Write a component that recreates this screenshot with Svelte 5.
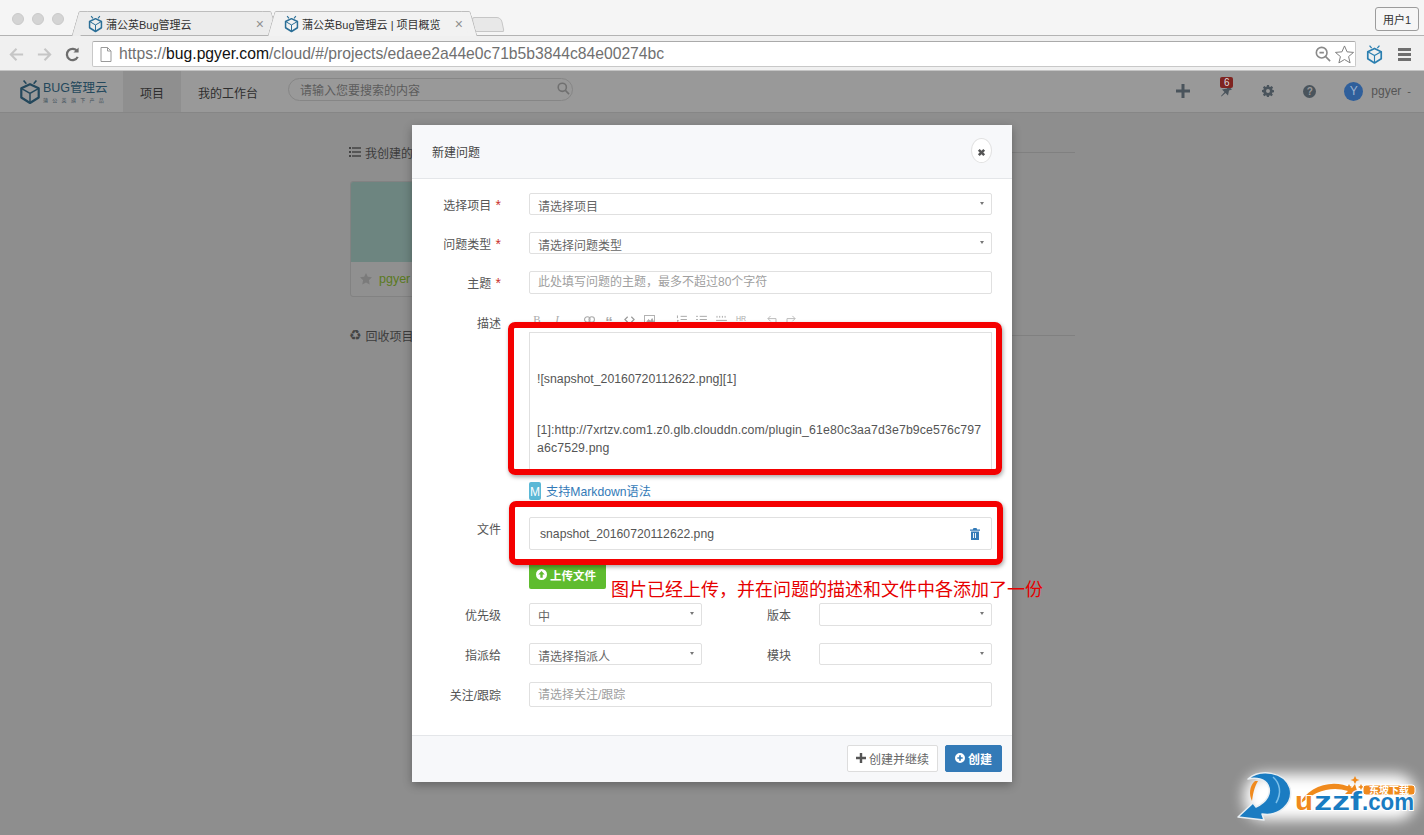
<script>
  const splitRows = [
    { label: '优先级', value: '中', side: '版本' },
    { label: '指派给', value: '请选择指派人', side: '模块' },
  ];
</script>

{#snippet cube(cls)}
  <svg class={cls} viewBox="0 0 24 28" fill="none" stroke="currentColor" stroke-width="2.4" stroke-linejoin="round">
    <path d="M12 5.500 L21.500 10 V20 L12 26 L2.500 20 V10 Z" />
    <path d="M2.500 10 L12 15.500 L21.500 10 M12 15.500 V26" stroke-width="1.6" />
    <path d="M5 1.500 L8 5 M19 1.500 L16 5" stroke-width="1.8" />
  </svg>
{/snippet}

{#snippet caret()}
  <span class="caret"></span>
{/snippet}

<div class="window">
  <div class="tabstrip">
    <div class="lights"><i></i><i></i><i></i></div>
    <div class="tab">
      {@render cube('favicon')}
      <span class="tab-title">蒲公英Bug管理云</span>
      <span class="tab-x">×</span>
    </div>
    <div class="tab active">
      {@render cube('favicon')}
      <span class="tab-title">蒲公英Bug管理云 | 项目概览</span>
      <span class="tab-x">×</span>
    </div>
    <div class="newtab"></div>
    <div class="user-btn">用户1</div>
  </div>

  <div class="toolbar">
    <svg class="nav-ico" viewBox="0 0 18 18" fill="none" stroke="#c6c6c6" stroke-width="2.2"><path d="M16 9H3M9 3L3 9l6 6" /></svg>
    <svg class="nav-ico" viewBox="0 0 18 18" fill="none" stroke="#c6c6c6" stroke-width="2.2"><path d="M2 9h13M9 3l6 6-6 6" /></svg>
    <svg class="nav-ico" viewBox="0 0 18 18" fill="none" stroke="#6e6e6e" stroke-width="2.4"><path d="M14.500 11.500A6 6 0 1 1 14 5.500" /><path d="M15.500 1.500v5.500H10" fill="#6e6e6e" stroke="none" /></svg>
    <div class="omnibox">
      <svg class="page-ico" viewBox="0 0 12 15" fill="#fff" stroke="#9a9a9a"><path d="M1 .5h6.500L11 4v10.500H1zM7.500 .5V4H11" /></svg>
      <span class="url"><span class="dim">https://</span>bug.pgyer.com<span class="dim">/cloud/#/projects/edaee2a44e0c71b5b3844c84e00274bc</span></span>
      <svg class="zoom-ico" viewBox="0 0 18 18" fill="none" stroke="#8a8a8a" stroke-width="1.8"><circle cx="7.500" cy="7.500" r="6" /><path d="M12 12l5 5M5 7.500h5" /></svg>
      <svg class="star-ico" viewBox="0 0 20 20" fill="#fff" stroke="#7a7a7a"><path d="M10 1l2.700 6.200 6.800.6-5.200 4.400 1.600 6.600L10 15.300 4.100 18.800l1.600-6.600L.5 7.800l6.800-.6z" /></svg>
    </div>
    {@render cube('ext-ico')}
    <div class="burger"><i></i><i></i><i></i></div>
  </div>

  <div class="app">
    <header class="topnav">
      <div class="brand">
        {@render cube('brand-ico')}
        <div class="brand-text">
          <span class="brand-name">BUG管理云</span>
          <span class="brand-sub">蒲公英旗下产品</span>
        </div>
      </div>
      <a class="navitem current">项目</a>
      <a class="navitem">我的工作台</a>
      <div class="search">
        <span>请输入您要搜索的内容</span>
        <svg viewBox="0 0 14 14" fill="none" stroke="#707070" stroke-width="1.7"><circle cx="5.700" cy="5.700" r="4.400" /><path d="M9 9l4 4" /></svg>
      </div>
      <div class="nav-right">
        <svg class="plus-ico" viewBox="0 0 14 14"><path d="M5.500 0h3v5.500H14v3H8.500V14h-3V8.500H0v-3h5.500z" fill="#4a545c" /></svg>
        <div class="bell">
          <svg viewBox="0 0 14 14"><path d="M8.500 1l4.500 4.500-3 1-1 5-2.500-2.500-4 3.500-.5-.5 3.500-4L3 5.500l5-1z" fill="#4a545c" /></svg>
          <span class="badge">6</span>
        </div>
        <svg class="cog-ico" viewBox="0 0 14 14"><path fill="#4a545c" fill-rule="evenodd" d="M5.800 0h2.400l.3 1.900 1.100.5 1.600-1.100 1.700 1.700-1.100 1.600.5 1.100 1.700.3v2.400l-1.900.3-.5 1.100 1.100 1.600-1.700 1.700-1.600-1.100-1.100.5-.3 1.900H5.800l-.3-1.900-1.100-.5-1.600 1.100-1.700-1.700 1.100-1.600-.5-1.100L0 8.200V5.800l1.700-.3.500-1.100L1.100 2.800l1.700-1.700 1.600 1.100 1.100-.5zM7 4.700a2.300 2.300 0 1 0 0 4.600 2.300 2.300 0 0 0 0-4.600z" /></svg>
        <span class="help">?</span>
        <span class="avatar">Y</span>
        <span class="username">pgyer</span>
        <span class="user-dash">-</span>
      </div>
    </header>

    <main class="content">
      <div class="section-head">
        <svg viewBox="0 0 12 10" fill="#444"><path d="M0 0h2v2H0zM3 .3h9v1.400H3zM0 4h2v2H0zM3 4.300h9v1.400H3zM0 8h2v2H0zM3 8.300h9v1.400H3z" /></svg>
        <span>我创建的</span>
        <span class="rule"></span>
      </div>
      <div class="card">
        <div class="card-cover"></div>
        <div class="card-foot">
          <svg viewBox="0 0 14 14" fill="#7b7b7b"><path d="M7 0l2.100 4.500 4.900.6-3.600 3.400.9 4.900L7 11l-4.300 2.400.9-4.900L0 5.100l4.900-.6z" /></svg>
          <span>pgyer</span>
        </div>
      </div>
      <div class="section-head recycle">
        <span class="recycle-ico">♻</span>
        <span>回收项目</span>
        <span class="rule"></span>
      </div>
    </main>

    <section class="modal">
      <div class="modal-head">
        <span>新建问题</span>
        <button class="close" aria-label="关闭">
          <svg viewBox="0 0 10 10"><path d="M1 3l2-2 2 2 2-2 2 2-2 2 2 2-2 2-2-2-2 2-2-2 2-2z" fill="#555" /></svg>
        </button>
      </div>

      <div class="modal-body">
        <div class="row r-project">
          <label>选择项目 <b>*</b></label>
          <div class="field select">请选择项目{@render caret()}</div>
        </div>
        <div class="row r-type">
          <label>问题类型 <b>*</b></label>
          <div class="field select">请选择问题类型{@render caret()}</div>
        </div>
        <div class="row r-title">
          <label>主题 <b>*</b></label>
          <div class="field placeholder">此处填写问题的主题，最多不超过80个字符</div>
        </div>

        <div class="row r-desc">
          <label>描述</label>
          <div class="editor">
            <div class="md-tools">
              <span class="tool serif">B</span>
              <span class="tool serif it">I</span>
              <span class="tool sep">
                <svg viewBox="0 0 12 8" fill="none" stroke="#aaa" stroke-width="1.2"><rect x=".6" y="1" width="6" height="6" rx="3" /><rect x="5.400" y="1" width="6" height="6" rx="3" /></svg>
              </span>
              <span class="tool quote">“</span>
              <span class="tool">
                <svg viewBox="0 0 12 8" fill="none" stroke="#999" stroke-width="1.3"><path d="M4 1L1 4l3 3M8 1l3 3-3 3" /></svg>
              </span>
              <span class="tool">
                <svg viewBox="0 0 12 10" fill="none" stroke="#aaa"><rect x=".5" y=".5" width="11" height="9" /><path d="M2 9l3-4 2 2 2-3 2 5z" fill="#aaa" /></svg>
              </span>
              <span class="tool sep">
                <svg viewBox="0 0 12 10" fill="none" stroke="#aaa" stroke-width="1.100"><path d="M5 1.500h7M5 5h7M5 8.500h7M1.500 .5v3M1 6h1.500L1 9h2" /></svg>
              </span>
              <span class="tool">
                <svg viewBox="0 0 12 10" fill="none" stroke="#aaa" stroke-width="1.100"><path d="M4 1.500h8M4 5h8M4 8.500h8M0 1.500h2M0 5h2M0 8.500h2" /></svg>
              </span>
              <span class="tool">
                <svg viewBox="0 0 12 10" fill="none" stroke="#aaa" stroke-width="1.100"><path d="M0 9h12M0 6h12M1 1v2M4 1v2M7 1v2M10 1v2" /></svg>
              </span>
              <span class="tool hr">HR</span>
              <span class="tool sep2">
                <svg viewBox="0 0 12 10" fill="none" stroke="#bbb" stroke-width="1.100"><path d="M11 9V4H2M5 1L2 4l3 3" /></svg>
              </span>
              <span class="tool">
                <svg viewBox="0 0 12 10" fill="none" stroke="#bbb" stroke-width="1.100"><path d="M1 9V4h9M7 1l3 3-3 3" /></svg>
              </span>
            </div>
            <div class="md-area">
              <p>![snapshot_20160720112622.png][1]</p>
              <p class="url-line">[1]:http://7xrtzv.com1.z0.glb.clouddn.com/plugin_61e80c3aa7d3e7b9ce576c797a6c7529.png</p>
            </div>
            <a class="md-link"><span class="m-badge">M</span>支持Markdown语法</a>
          </div>
        </div>

        <div class="row r-file">
          <label>文件</label>
          <div class="files">
            <div class="file-item">
              <span>snapshot_20160720112622.png</span>
              <svg viewBox="0 0 10 12" fill="#337ab7"><path fill-rule="evenodd" d="M3.500 0h3l.7 1.500H10v1.200H0V1.500h2.800zM1 3.500h8V12H1zM3 5v5h.9V5zm2.100 0v5H6V5z" /></svg>
            </div>
            <button class="upload">
              <svg viewBox="0 0 12 12"><path fill-rule="evenodd" fill="#fff" d="M6 0a6 6 0 1 1 0 12A6 6 0 0 1 6 0zm0 2.200L2.500 6h2.200v3.500h2.600V6h2.200z" /></svg>
              上传文件
            </button>
          </div>
        </div>

        <div class="split-rows">
          {#each splitRows as r}
            <div class="row split">
              <label>{r.label}</label>
              <div class="field select">{r.value}{@render caret()}</div>
              <label>{r.side}</label>
              <div class="field select">{@render caret()}</div>
            </div>
          {/each}
        </div>

        <div class="row r-watch">
          <label>关注/跟踪</label>
          <div class="field placeholder">请选择关注/跟踪</div>
        </div>
      </div>

      <div class="modal-foot">
        <button class="btn ghost">
          <svg viewBox="0 0 14 14"><path d="M5.300 0h3.400v5.300H14v3.400H8.700V14H5.300V8.700H0V5.300h5.300z" fill="#555" /></svg>
          创建并继续
        </button>
        <button class="btn primary">
          <svg viewBox="0 0 12 12"><path fill-rule="evenodd" fill="#fff" d="M6 0a6 6 0 1 1 0 12A6 6 0 0 1 6 0zM5 2.800V5H2.800v2H5v2.200h2V7h2.200V5H7V2.800z" /></svg>
          创建
        </button>
      </div>

      <div class="callout c1"></div>
      <div class="callout c2"></div>
      <div class="note">图片已经上传，并在问题的描述和文件中各添加了一份</div>
    </section>

    <div class="watermark">
      <div class="wm-glow"></div>
      <svg viewBox="0 0 204 75" width="204" height="75">
        <path d="M18 57 L33 43 L36 47 C47 42 52 33 48 25 C45 19 36 17 28 19 C40 9 64 11 70 28 C74 44 58 57 42 54 L44 60 Z" fill="#1a7cc2" stroke="#e8eef2" stroke-width="1.500" stroke-linejoin="round" />
        <path d="M35 21 C29 26 29 35 32 41 C33 34 34 28 38 21 Z" fill="#f08a1d" />
        <path d="M53 17 C60 23 62 33 56 43" fill="none" stroke="#7cc0ea" stroke-width="1.500" />
        <path d="M78 46 C88 26 112 18 132 28 L135 24 L138 34 L125 34 L128 31 C112 26 95 30 78 46 Z" fill="#f08a1d" />
        <path d="M135 16l1.500 3 3 1-3 1-1.500 3-1.500-3-3-1 3-1zM129 24l1 2 2 1-2 1-1 2-1-2-2-1 2-1zM141 24l1 2 2 1-2 1-1 2-1-2-2-1 2-1z" fill="#f08a1d" />
        <text x="75" y="50" class="wm-u" textLength="18" lengthAdjust="spacingAndGlyphs">u</text>
        <text x="94" y="50" class="wm-zz" textLength="48" lengthAdjust="spacingAndGlyphs">zzf</text>
        <text x="142" y="50" class="wm-com" textLength="52" lengthAdjust="spacingAndGlyphs">.com</text>
        <rect x="143" y="25" width="52" height="10" rx="3" fill="#f08a1d" stroke="#fff" />
        <text x="169" y="34" class="wm-tag" text-anchor="middle">东坡下载</text>
      </svg>
    </div>
  </div>
</div>

<style>
  :global(body) {
    margin: 0;
    background: #8e8e8e;
  }

  .window {
    width: 1424px;
    height: 835px;
    overflow: hidden;
    display: flex;
    flex-direction: column;
    font-family: "Liberation Sans", "Noto Sans CJK SC", sans-serif;
    color: #333;
  }

  .tabstrip {
    height: 36px;
    flex: none;
    box-sizing: border-box;
    background: #f5f5f5;
    border-bottom: 1px solid #b3b3b3;
    display: flex;
    align-items: flex-end;
    padding-left: 12px;
  }

  .lights {
    display: flex;
    gap: 8px;
    align-self: flex-start;
    margin-top: 13px;
    margin-right: 16px;
  }

  .lights i {
    width: 12px;
    height: 12px;
    border-radius: 50%;
    background: #d4d4d4;
    border: 0.5px solid #cacaca;
    box-sizing: border-box;
  }

  .tab {
    position: relative;
    height: 25px;
    width: 190px;
    margin-right: 6px;
    margin-bottom: -1px;
    box-sizing: border-box;
    padding: 0 6px 0 8px;
    display: flex;
    align-items: center;
    gap: 3px;
    font-size: 11px;
    color: #333;
    background: #ececec;
    border-top: 1px solid #bdbdbd;
    border-bottom: 1px solid #b3b3b3;
  }

  .tab::before,
  .tab::after {
    content: "";
    position: absolute;
    top: -1px;
    bottom: -1px;
    width: 9px;
    background: inherit;
    border-top: 1px solid #bdbdbd;
    border-left: 1px solid #bdbdbd;
    border-radius: 2px 0 0 0;
    box-sizing: border-box;
  }

  .tab::before {
    left: -5px;
    transform: skewX(-16deg);
  }

  .tab::after {
    right: -5px;
    border-left: none;
    border-right: 1px solid #bdbdbd;
    border-radius: 0 2px 0 0;
    transform: skewX(16deg);
  }

  .tab.active {
    background: #f2f2f2;
    border-bottom-color: #f2f2f2;
    width: 193px;
    z-index: 2;
    margin-right: 4px;
  }

  .tab-title {
    flex: 1;
    white-space: nowrap;
    overflow: hidden;
    z-index: 1;
  }

  .tab-x {
    color: #8f8f8f;
    font-size: 14px;
    line-height: 1;
    z-index: 1;
  }

  .favicon {
    width: 15px;
    height: 18px;
    color: #2b6f97;
    flex: none;
    z-index: 1;
  }

  .newtab {
    width: 30px;
    height: 15px;
    margin-bottom: 3px;
    background: #e8e8e8;
    border: 1px solid #c6c6c6;
    border-radius: 3px 5px 2px 2px;
    box-sizing: border-box;
    transform: skewX(12deg);
  }

  .user-btn {
    margin-left: auto;
    margin-right: 5px;
    align-self: flex-start;
    margin-top: 7px;
    width: 44px;
    height: 24px;
    box-sizing: border-box;
    border: 1px solid #9c9c9c;
    border-radius: 3px;
    background: #f6f6f6;
    font-size: 11px;
    display: flex;
    align-items: center;
    justify-content: center;
  }

  .toolbar {
    height: 35px;
    flex: none;
    box-sizing: border-box;
    background: #f0f0f0;
    border-bottom: 1px solid #c4c4c4;
    display: flex;
    align-items: center;
    padding: 2px 9px 0 8px;
  }

  .nav-ico {
    width: 17px;
    height: 17px;
    margin-right: 11px;
  }

  .omnibox {
    width: 1264px;
    height: 26px;
    box-sizing: border-box;
    background: #fff;
    border: 1px solid #c8c8c8;
    border-top-color: #aaa;
    border-radius: 2px;
    display: flex;
    align-items: center;
    padding: 0 1px 0 7px;
  }

  .page-ico {
    width: 12px;
    height: 15px;
    margin-right: 7px;
    flex: none;
  }

  .url {
    font-size: 15.700px;
    color: #111;
    flex: 1;
    white-space: nowrap;
  }

  .dim {
    color: #707070;
  }

  .zoom-ico {
    width: 16px;
    height: 16px;
    margin-right: 4px;
  }

  .star-ico {
    width: 19px;
    height: 19px;
  }

  .ext-ico {
    width: 17px;
    height: 21px;
    color: #2b7fb0;
    margin-left: 10px;
  }

  .burger {
    margin-left: 15px;
    display: flex;
    flex-direction: column;
    gap: 2px;
  }

  .burger i {
    width: 13px;
    height: 3px;
    background: #6f6f6f;
  }

  .app {
    position: relative;
    flex: 1;
    background: #8e8e8e;
  }

  .topnav {
    height: 42px;
    box-sizing: border-box;
    background: #999;
    border-bottom: 1px solid #868686;
    display: flex;
    align-items: center;
    padding-left: 19px;
  }

  .brand {
    width: 104px;
    display: flex;
    align-items: center;
    gap: 2px;
  }

  .brand-ico {
    width: 22px;
    height: 26px;
    color: #24485c;
    flex: none;
  }

  .brand-text {
    display: flex;
    flex-direction: column;
    line-height: 1;
    margin-top: 2px;
  }

  .brand-name {
    font-size: 12.500px;
    color: #24485c;
  }

  .brand-sub {
    font-size: 5px;
    letter-spacing: 4.300px;
    color: #3d4f59;
    margin-top: 3px;
    white-space: nowrap;
  }

  .navitem {
    height: 41px;
    box-sizing: border-box;
    display: flex;
    align-items: center;
    padding: 1px 17px 0;
    font-size: 12px;
    color: #2e2e2e;
  }

  .navitem.current {
    background: #8f8f8f;
    width: 58px;
    justify-content: center;
    padding: 1px 0 0;
  }

  .search {
    margin: -5px 0 0 13px;
    width: 285px;
    height: 23px;
    box-sizing: border-box;
    border: 1px solid #868686;
    border-radius: 12px;
    display: flex;
    align-items: center;
    justify-content: space-between;
    padding: 0 2px 0 11px;
    font-size: 12px;
    color: #5c5c5c;
  }

  .search svg {
    width: 13px;
    height: 13px;
    margin-bottom: 2px;
  }

  .nav-right {
    margin-left: auto;
    margin-top: -1px;
    display: flex;
    align-items: center;
    padding-right: 13px;
  }

  .plus-ico {
    width: 14px;
    height: 14px;
    margin-right: 29px;
  }

  .bell {
    position: relative;
    width: 14px;
    height: 14px;
    margin-right: 29px;
  }

  .bell svg {
    width: 14px;
    height: 14px;
  }

  .badge {
    position: absolute;
    top: -7px;
    left: 1px;
    width: 13px;
    height: 11px;
    border-radius: 2px;
    background: #7f2420;
    color: #ddd;
    font-size: 10px;
    line-height: 11px;
    text-align: center;
  }

  .cog-ico {
    width: 12px;
    height: 12px;
    margin-right: 29px;
  }

  .help {
    width: 13px;
    height: 13px;
    border-radius: 50%;
    background: #4a545c;
    color: #999;
    font-size: 10px;
    font-weight: bold;
    line-height: 13px;
    text-align: center;
    margin-right: 28px;
  }

  .avatar {
    width: 19px;
    height: 19px;
    border-radius: 50%;
    background: #2f5f9b;
    color: #9db3cf;
    font-size: 12px;
    line-height: 19px;
    text-align: center;
    margin-right: 8px;
  }

  .username {
    font-size: 12px;
    color: #555;
  }

  .user-dash {
    font-size: 11px;
    color: #555;
    margin-left: 6px;
  }

  .content {
    width: 726px;
    margin-left: 349px;
    padding-top: 31px;
    font-size: 12px;
    color: #3c3c3c;
  }

  .section-head {
    display: flex;
    align-items: center;
    height: 16px;
    gap: 4px;
  }

  .section-head > svg {
    width: 12px;
    height: 10px;
  }

  .rule {
    flex: 1;
    height: 1px;
    background: #808080;
    margin-left: 8px;
  }

  .card {
    width: 120px;
    height: 116px;
    margin: 21px 0 0 1px;
    box-sizing: border-box;
    border: 1px solid #828282;
    border-radius: 3px;
    background: #909090;
    overflow: hidden;
  }

  .card-cover {
    height: 80px;
    background: #6d8580;
  }

  .card-foot {
    height: 34px;
    display: flex;
    align-items: center;
    padding-left: 9px;
    gap: 7px;
    font-size: 12.500px;
    color: #5a7a20;
  }

  .card-foot svg {
    width: 12px;
    height: 12px;
  }

  .section-head.recycle {
    margin-top: 30px;
  }

  .recycle-ico {
    font-family: "DejaVu Sans", sans-serif;
    font-size: 14px;
    color: #444;
  }

  .modal {
    position: absolute;
    left: 412px;
    top: 54px;
    width: 600px;
    height: 657px;
    background: #fff;
    box-shadow: 0 3px 9px rgba(0, 0, 0, 0.3);
    display: flex;
    flex-direction: column;
    font-size: 12px;
    color: #555;
  }

  .modal-head {
    height: 54px;
    flex: none;
    box-sizing: border-box;
    background: #f7f8fa;
    border-bottom: 1px solid #e4e6e9;
    display: flex;
    align-items: center;
    justify-content: space-between;
    padding: 0 20px;
    color: #444;
  }

  .close {
    width: 21px;
    height: 25px;
    padding: 0;
    margin-top: -2px;
    border: 1px solid #e2e2e2;
    border-radius: 50%;
    background: #fff;
    display: flex;
    align-items: center;
    justify-content: center;
  }

  .close svg {
    width: 9px;
    height: 9px;
    margin-top: 3px;
  }

  .modal-body {
    flex: 1;
    padding-top: 14px;
    display: flex;
    flex-direction: column;
  }

  .row {
    display: grid;
    grid-template-columns: 89px 463px;
    column-gap: 28px;
    align-items: center;
  }

  label {
    text-align: right;
    color: #555;
    white-space: nowrap;
  }

  label b {
    color: #c9302c;
    font-size: 14px;
    line-height: 1;
    font-weight: normal;
    margin-left: 1px;
  }

  .field {
    position: relative;
    box-sizing: border-box;
    height: 22px;
    border: 1px solid #e0e0e0;
    border-radius: 2px;
    background: #fff;
    padding: 4px 0 0 8px;
    line-height: 19px;
    color: #666;
    overflow: hidden;
  }

  .placeholder {
    padding-top: 0;
    line-height: 21px;
    color: #a0a0a0;
  }

  .caret {
    position: absolute;
    right: 7px;
    top: 8px;
    border: 2px solid transparent;
    border-top: 3px solid #777;
    border-bottom: none;
  }

  .r-type {
    margin-top: 17px;
  }

  .r-title {
    margin-top: 17px;
  }

  .r-title .field {
    height: 23px;
  }

  .r-desc {
    margin-top: 19px;
    align-items: start;
  }

  .r-desc label {
    margin-top: 1px;
  }

  .md-tools {
    height: 19px;
    display: flex;
    align-items: flex-start;
    margin-left: -2px;
    font-size: 9px;
    line-height: 12px;
    color: #aaa;
  }

  .tool {
    width: 20px;
    height: 12px;
    flex: none;
    display: flex;
    align-items: center;
    justify-content: center;
  }

  .tool svg {
    width: 11px;
    height: 9px;
  }

  .sep {
    margin-left: 12px;
  }

  .sep2 {
    margin-left: 10px;
  }

  .serif {
    font-family: "Liberation Serif", serif;
    font-size: 11px;
  }

  .it {
    font-style: italic;
  }

  .quote {
    font-size: 15px;
    font-weight: bold;
    line-height: 18px;
    align-items: flex-start;
  }

  .hr {
    font-size: 7px;
  }

  .md-area {
    box-sizing: border-box;
    height: 141px;
    border: 1px solid #e0e0e0;
    padding: 37px 8px 0 7px;
    font-size: 12.300px;
    line-height: 18px;
    color: #555;
    word-break: break-all;
  }

  .md-area p {
    margin: 0;
  }

  .url-line {
    padding-top: 33px;
    letter-spacing: 0.13px;
  }

  .md-link {
    display: flex;
    align-items: center;
    gap: 5px;
    margin-top: 9px;
    height: 18px;
    font-size: 12.200px;
    color: #337ab7;
  }

  .m-badge {
    width: 12px;
    height: 18px;
    border-radius: 2px;
    background: #5bb8d6;
    color: #fff;
    font-size: 12px;
    line-height: 20px;
    text-align: center;
  }

  .r-file {
    margin-top: 17px;
    align-items: start;
  }

  .r-file label {
    margin-top: 3px;
  }

  .file-item {
    height: 33px;
    box-sizing: border-box;
    border: 1px solid #e0e0e0;
    border-radius: 2px;
    display: flex;
    align-items: center;
    justify-content: space-between;
    padding: 0 11px 0 10px;
    font-size: 12.200px;
    color: #555;
  }

  .file-item svg {
    width: 10px;
    height: 12px;
  }

  .upload {
    display: flex;
    align-items: center;
    gap: 3px;
    margin-top: 12px;
    width: 77px;
    height: 27px;
    padding: 0 0 2px 7px;
    border: none;
    border-radius: 2px;
    background: #5fbc2f;
    color: #fff;
    font: bold 11.500px "Liberation Sans", "Noto Sans CJK SC", sans-serif;
  }

  .upload svg {
    width: 11px;
    height: 11px;
  }

  .split-rows {
    margin-top: 14px;
    display: flex;
    flex-direction: column;
    gap: 17px;
  }

  .row.split {
    grid-template-columns: 89px 173px 61px 173px;
    column-gap: 28px;
  }

  .split:first-child .field {
    height: 23px;
  }

  .r-watch {
    margin-top: 17px;
  }

  .r-watch .field {
    height: 25px;
    line-height: 24px;
  }

  .modal-foot {
    height: 47px;
    flex: none;
    box-sizing: border-box;
    background: #f7f8fa;
    border-top: 1px solid #e4e6e9;
    display: flex;
    align-items: center;
    justify-content: flex-end;
    gap: 7px;
    padding: 0 10px 2px 0;
  }

  .btn {
    height: 27px;
    box-sizing: border-box;
    border-radius: 2px;
    display: flex;
    align-items: center;
    gap: 3px;
    font: 12px "Liberation Sans", "Noto Sans CJK SC", sans-serif;
  }

  .btn svg {
    width: 10px;
    height: 10px;
  }

  .ghost {
    width: 91px;
    border: 1px solid #ddd;
    background: #fff;
    color: #666;
    padding: 0 0 0 8px;
  }

  .primary {
    width: 57px;
    border: 1px solid #337ab7;
    background: #337ab7;
    color: #fff;
    font-weight: bold;
    padding: 0 0 0 9px;
  }

  .callout {
    position: absolute;
    box-sizing: border-box;
    border: 6px solid #f40000;
    border-radius: 7px;
    box-shadow: 1px 2px 4px rgba(0, 0, 0, 0.35);
  }

  .c1 {
    left: 96px;
    top: 197px;
    width: 494px;
    height: 153px;
  }

  .c2 {
    left: 97px;
    top: 376px;
    width: 494px;
    height: 64px;
  }

  .note {
    position: absolute;
    left: 199px;
    top: 453px;
    font-size: 18px;
    line-height: 24px;
    color: #e60000;
    white-space: nowrap;
  }

  .watermark {
    position: absolute;
    right: 0;
    bottom: 0;
    width: 204px;
    height: 75px;
  }

  .watermark svg {
    position: relative;
    display: block;
  }

  .wm-glow {
    position: absolute;
    left: 24px;
    top: 14px;
    width: 172px;
    height: 46px;
    border-radius: 20px;
    background: #fff;
    filter: blur(7px);
  }

  .wm-u,
  .wm-zz {
    font: bold 26px "Liberation Sans", sans-serif;
    paint-order: stroke;
    stroke: #fff;
    stroke-width: 2px;
  }

  .wm-u {
    fill: #f08a1d;
  }

  .wm-zz,
  .wm-com {
    fill: #1a7cc2;
  }

  .wm-com {
    font: bold 23px "Liberation Sans", sans-serif;
    paint-order: stroke;
    stroke: #fff;
    stroke-width: 2px;
  }

  .wm-tag {
    font: bold 10px "Noto Sans CJK SC", sans-serif;
    fill: #fff;
  }
</style>
